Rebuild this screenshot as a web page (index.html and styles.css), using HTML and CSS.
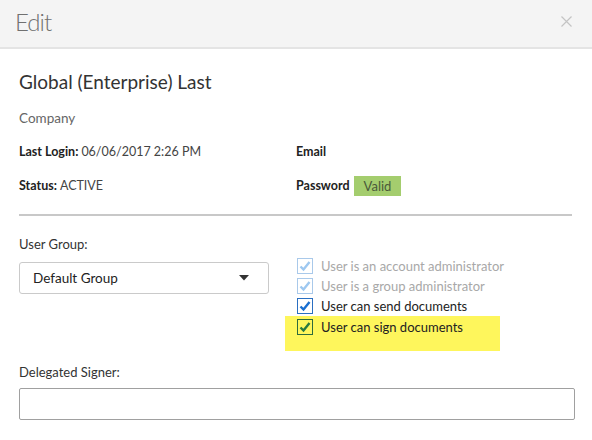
FILE: index.html
```html
<!DOCTYPE html>
<html>
<head>
<meta charset="utf-8">
<link rel="stylesheet" href="styles.css">
</head>
<body>
<div class="dialog">
  <div class="header">
    <div class="title">Edit</div>
    <svg class="close" width="11" height="11" viewBox="0 0 11 11"><path d="M0.5 0.5 L10.5 10.5 M10.5 0.5 L0.5 10.5" stroke="#c4c4c4" stroke-width="1.2" fill="none"/></svg>
  </div>
  <div class="body">
    <h1 class="name">Global (Enterprise) Last</h1>
    <div class="company">Company</div>
    <div class="info">
      <div class="cell"><b>Last Login:</b> 06/06/2017 2:26 PM</div>
      <div class="cell"><b>Email</b></div>
      <div class="cell"><b>Status:</b> ACTIVE</div>
      <div class="cell"><b>Password</b> <span class="badge">Valid</span></div>
    </div>
    <hr class="divider">
    <div class="group-row">
      <div class="group-col">
        <div class="label">User Group:</div>
        <div class="select">
          <span>Default Group</span>
          <svg width="10" height="6" viewBox="0 0 10 6"><path d="M0 0 H10 L5 5.5 Z" fill="#333"/></svg>
        </div>
      </div>
      <div class="checks">
        <div class="check disabled"><span class="box"><svg viewBox="0 0 14 14"><path d="M2.5 7.5 L5.5 10.5 L11.5 3" /></svg></span>User is an account administrator</div>
        <div class="check disabled"><span class="box"><svg viewBox="0 0 14 14"><path d="M2.5 7.5 L5.5 10.5 L11.5 3" /></svg></span>User is a group administrator</div>
        <div class="check on"><span class="box"><svg viewBox="0 0 14 14"><path d="M2.5 7.5 L5.5 10.5 L11.5 3" /></svg></span>User can send documents</div>
        <div class="highlight">
          <div class="check green"><span class="box"><svg viewBox="0 0 14 14"><path d="M2.5 7.5 L5.5 10.5 L11.5 3" /></svg></span>User can sign documents</div>
        </div>
      </div>
    </div>
    <div class="label delegated">Delegated Signer:</div>
    <div class="input"></div>
  </div>
</div>
</body>
</html>
```
FILE: styles.css
```css
html, body {
  margin: 0;
  padding: 0;
  background: #fff;
}
body {
  font-family: Lato, "Open Sans", sans-serif;
  color: #333;
  width: 592px;
  height: 440px;
  overflow: hidden;
}
.header {
  height: 47px;
  background: #f4f4f4;
  border-bottom: 2px solid #e4e4e4;
  display: flex;
  align-items: center;
  justify-content: space-between;
  padding: 0 20px 0 15px;
}
.title {
  font-size: 24px;
  font-weight: 300;
  letter-spacing: -1px;
  color: #707070;
  margin-top: -5px;
}
.close {
  margin-top: -4px;
}
.body {
  padding: 0 17px 0 19px;
}
.name {
  margin: 19px 0 0;
  font-size: 19px;
  font-weight: 400;
  color: #333;
  line-height: 28px;
}
.company {
  margin-top: 13px;
  font-size: 13.5px;
  color: #666;
  line-height: 18px;
}
.info {
  display: grid;
  grid-template-columns: 277px 1fr;
  row-gap: 14px;
  margin-top: 15px;
  font-size: 12.5px;
  color: #444;
}
.cell {
  line-height: 20px;
  display: flex;
  align-items: center;
  gap: 3px;
}
.cell b {
  color: #222;
  font-weight: 700;
}
.badge {
  background: #a4cd6e;
  color: #4a5a3a;
  padding: 0 10px;
  line-height: 20px;
  font-size: 13px;
  margin-left: 1px;
}
.divider {
  border: none;
  border-top: 2px solid #c8c8c8;
  margin: 18px 3px 0 0;
}
.group-row {
  display: flex;
  margin-top: 19px;
}
.group-col {
  width: 250px;
}
.label {
  font-size: 13px;
  color: #333;
  line-height: 18px;
}
.select {
  margin-top: 9px;
  height: 30px;
  border: 1px solid #cacaca;
  border-radius: 3px;
  display: flex;
  align-items: center;
  justify-content: space-between;
  padding: 0 19px 0 13px;
  font-size: 13.5px;
  color: #222;
}
.checks {
  margin-left: 28px;
  margin-top: 21px;
  display: flex;
  flex-direction: column;
}
.check {
  display: flex;
  align-items: center;
  font-size: 13px;
  line-height: 20px;
  height: 20px;
  color: #222;
  padding-left: 0;
}
.check .box {
  width: 14px;
  height: 14px;
  border: 1px solid #2a6fc2;
  margin-right: 8px;
  display: inline-flex;
  box-sizing: content-box;
}
.check svg {
  width: 14px;
  height: 14px;
}
.check svg path {
  fill: none;
  stroke-width: 2.4;
  stroke: #1a6fd0;
}
.check.disabled {
  color: #a8a8a8;
}
.check.disabled .box {
  border-color: #a9c9ea;
}
.check.disabled svg path {
  stroke: #9ec8f0;
}
.highlight {
  background: #fef65c;
  margin-left: -12px;
  padding: 1px 0 14px 12px;
  width: 203px;
  margin-top: 0;
}
.check.green .box {
  border-color: #2e6b3c;
}
.check.green svg path {
  stroke: #2a7a40;
}
.delegated {
  margin-top: 12px;
}
.input {
  margin-top: 7px;
  height: 30px;
  border: 1px solid #a0a0a0;
  border-radius: 2px;
}
```
